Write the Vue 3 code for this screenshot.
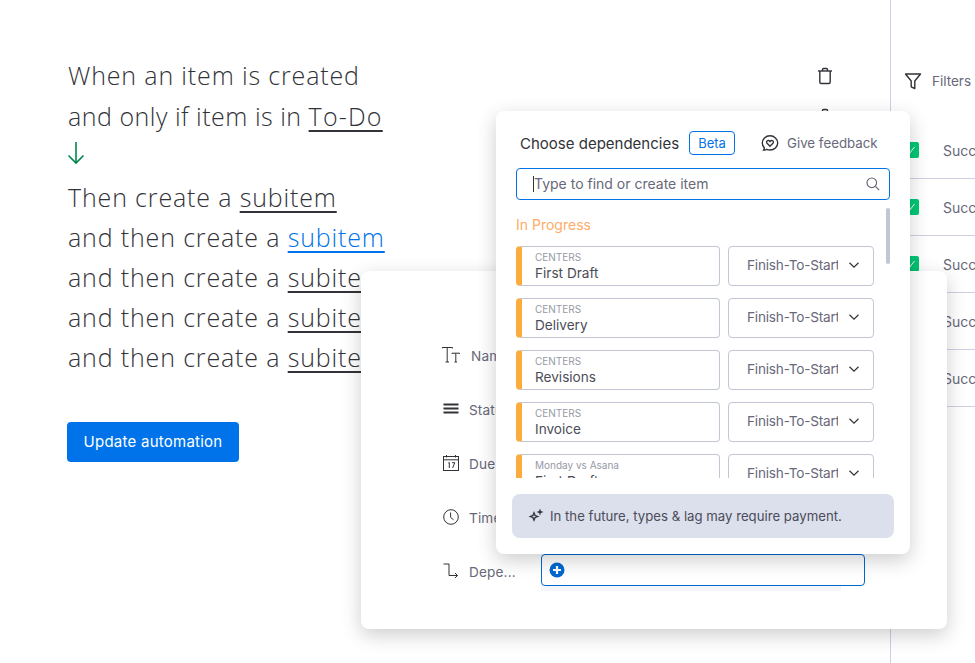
<template>
  <div class="page">
    <section class="editor">
      <div class="sentence">
        <div class="line">When an item is created</div>
        <div class="line condition">and only if item is in <span class="token">To-Do</span></div>
        <div class="arrow-row">
          <svg width="18" height="24" viewBox="0 0 18 24" fill="none" stroke="#00854d" stroke-width="1.6">
            <path d="M9 1V22" />
            <path d="M1.5 14.5L9 22L16.5 14.5" />
          </svg>
        </div>
        <div v-for="(line, i) in actions" :key="i" class="line">
          {{ line.text }} <span class="token" :class="{ active: line.active }">subitem</span>
        </div>
        <button class="update-btn">Update automation</button>
      </div>
      <div class="trash-col">
        <svg v-for="n in 2" :key="n" width="18" height="18" viewBox="0 0 18 18" fill="none" stroke="#323338" stroke-width="1.4">
          <path d="M2 4H16" />
          <path d="M6.5 4V2.6C6.5 1.9 7 1.5 7.6 1.5H10.4C11 1.5 11.5 1.9 11.5 2.6V4" />
          <path d="M3.8 4V15C3.8 15.9 4.4 16.5 5.2 16.5H12.8C13.6 16.5 14.2 15.9 14.2 15V4" />
        </svg>
      </div>
    </section>

    <aside class="log">
      <div class="filters">
        <svg width="18" height="18" viewBox="0 0 18 18" fill="none" stroke="#323338" stroke-width="1.4" stroke-linejoin="round">
          <path d="M1.5 2H16.5L10.8 9V16.5L7.2 14.8V9Z" />
        </svg>
        <span>Filters</span>
      </div>
      <div v-for="n in 5" :key="n" class="log-row">
        <span class="check">
          <svg width="10" height="10" viewBox="0 0 10 10" fill="none" stroke="#fff" stroke-width="1">
            <path d="M1.5 5.5L3.8 8L8.5 2" />
          </svg>
        </span>
        <span class="log-text">Success</span>
      </div>
    </aside>

    <div class="item-card">
      <div v-for="row in columns" :key="row.label" class="card-row">
        <span class="col-icon">
          <svg width="20" height="20" viewBox="1 0 20 20" fill="none" stroke="#323338" stroke-width="1">
            <template v-if="row.icon === 'text'">
              <path d="M1 3.5V2.5H11.5V3.5M6.2 2.5V17M4.5 17H8" />
              <path d="M11 9V8.2H18.5V9M14.8 8.2V17M13.5 17H16" />
            </template>
            <template v-else-if="row.icon === 'status'">
              <path stroke-width="1.8" d="M2.5 5.5H17.5M2.5 9.5H17.5M2.5 13.5H17.5" />
            </template>
            <template v-else-if="row.icon === 'date'">
              <rect x="2.5" y="3.5" width="15" height="14" />
              <path d="M2.5 6.8H17.5M5.5 2V4.5M14.5 2V4.5" />
              <path d="M7.3 10L8.3 9.5V15M11 9.7H13.8L11.6 15" />
            </template>
            <template v-else-if="row.icon === 'time'">
              <circle cx="10" cy="10" r="7.3" />
              <path d="M9.6 5.5V10.4L12.6 12.8" />
            </template>
            <template v-else>
              <path d="M2.5 3H8V14.5H16.5" />
              <path d="M14 12L16.5 14.5L14 17" />
            </template>
          </svg>
        </span>
        <span class="col-label" :class="{ first: row.icon === 'text' }">{{ row.label }}</span>
        <div v-if="row.icon === 'dep'" class="dep-wrap">
          <div class="dep-field">
            <svg width="16" height="16" viewBox="0 0 16 16">
              <circle cx="8" cy="8" r="7.5" fill="#0069d0" />
              <path d="M8 4V12M4 8H12" stroke="#fff" stroke-width="2.2" />
            </svg>
          </div>
        </div>
      </div>
    </div>

    <div class="dep-popover">
      <header class="pop-head">
        <span class="pop-title">Choose dependencies</span>
        <span class="beta">Beta</span>
        <span class="feedback">
          <svg width="18" height="18" viewBox="0 0 18 18" fill="none" stroke="#323338" stroke-width="1.4">
            <path d="M2.6 16C3.2 15.2 3.4 14.6 3.3 13.8C2 12.5 1.3 10.9 1.3 9C1.3 5.1 4.6 1.8 9 1.8C13.3 1.8 16.7 5.1 16.7 9C16.7 13 13.3 16 9 16C7.8 16 6.8 15.8 5.8 15.4C4.8 16 3.8 16.2 2.6 16Z" />
            <path d="M9 12.2L6.1 9.2C5.4 8.4 5.5 7.3 6.2 6.8C7 6.2 8.2 6.4 9 7.5C9.8 6.4 11 6.2 11.8 6.8C12.5 7.3 12.6 8.4 11.9 9.2Z" />
          </svg>
          Give feedback
        </span>
      </header>

      <div class="search-box">
        <span class="caret"></span>
        <span class="placeholder">Type to find or create item</span>
        <svg width="14" height="14" viewBox="0 0 14 14" fill="none" stroke="#676879" stroke-width="1.2">
          <circle cx="5.8" cy="5.8" r="4.8" />
          <path d="M9.4 9.4L13.2 13.2" />
        </svg>
      </div>

      <div class="dep-list">
        <div class="group-title">In Progress</div>
        <div v-for="(item, i) in items" :key="i" class="dep-row">
          <div class="dep-item">
            <small>{{ item.board }}</small>
            <span>{{ item.name }}</span>
          </div>
          <div class="dep-type">
            <span class="type-text">Finish-To-Start</span>
            <svg width="12" height="12" viewBox="0 0 12 12" fill="none" stroke="#323338" stroke-width="1.2">
              <path d="M1.5 3.8L6 8.2L10.5 3.8" />
            </svg>
          </div>
        </div>
      </div>
      <span class="scroll-thumb"></span>

      <div class="notice">
        <svg width="16" height="16" viewBox="0 0 16 16" fill="#323338">
          <path d="M6 3L7.6 6.9L11.5 8.5L7.6 10.1L6 14L4.4 10.1L0.5 8.5L4.4 6.9ZM6 6L5.6 8.1L3.5 8.5L5.6 8.9L6 11L6.4 8.9L8.5 8.5L6.4 8.1Z" fill-rule="evenodd" />
          <path d="M12 0.5L12.9 3.1L15.5 4L12.9 4.9L12 7.5L11.1 4.9L8.5 4L11.1 3.1Z" />
        </svg>
        <span>In the future, types &amp; lag may require payment.</span>
      </div>
    </div>
  </div>
</template>

<script setup>
const actions = [
  { text: 'Then create a', active: false },
  { text: 'and then create a', active: true },
  { text: 'and then create a', active: false },
  { text: 'and then create a', active: false },
  { text: 'and then create a', active: false },
]

const columns = [
  { label: 'Name', icon: 'text' },
  { label: 'Status', icon: 'status' },
  { label: 'Due date', icon: 'date' },
  { label: 'Timeline', icon: 'time' },
  { label: 'Depe...', icon: 'dep' },
]

const items = [
  { board: 'CENTERS', name: 'First Draft' },
  { board: 'CENTERS', name: 'Delivery' },
  { board: 'CENTERS', name: 'Revisions' },
  { board: 'CENTERS', name: 'Invoice' },
  { board: 'Monday vs Asana', name: 'First Draft' },
]
</script>

<style>
html, body {
  margin: 0;
  background: #fff;
  overflow: hidden;
}
</style>

<style scoped>
.page {
  position: relative;
  width: 975px;
  height: 663px;
  overflow: hidden;
  display: flex;
  background: #fff;
  color: #323338;
  font-family: Inter, "Liberation Sans", sans-serif;
}

.editor {
  width: 891px;
  flex: none;
  box-sizing: border-box;
  padding: 55px 56px 0 68px;
  border-right: 1px solid #cfd0e4;
  display: flex;
  justify-content: space-between;
}

.sentence {
  font-family: "Open Sans", sans-serif;
  font-weight: 300;
  font-size: 25px;
  letter-spacing: 0.85px;
}

.line {
  height: 40px;
  line-height: 40px;
  white-space: nowrap;
}

.line + .line {
  margin-top: 1px;
}

.arrow-row + .line ~ .line {
  margin-top: 0;
}

.line.condition {
  letter-spacing: 0.5px;
}

.arrow-row {
  height: 41px;
  display: flex;
  align-items: center;
  margin-left: -1px;
  padding-bottom: 8px;
  box-sizing: border-box;
}

.token {
  text-decoration: underline;
  text-decoration-thickness: 2px;
  text-underline-offset: 4px;
  text-decoration-color: #323338;
}

.condition .token {
  letter-spacing: 1.2px;
}

.token.active {
  color: #0073ea;
  text-decoration-color: #0073ea;
}

.update-btn {
  display: block;
  margin-top: 45px;
  margin-left: -1px;
  width: 172px;
  height: 40px;
  padding: 0 0 2px;
  border: none;
  border-radius: 4px;
  background: #0073ea;
  color: #fff;
  font-family: Inter, sans-serif;
  font-size: 15px;
  letter-spacing: 0.25px;
}

.trash-col {
  display: flex;
  flex-direction: column;
  gap: 23px;
  padding-top: 12px;
}

.log {
  flex: 1;
  min-width: 0;
}

.filters {
  display: flex;
  align-items: center;
  gap: 10px;
  height: 122px;
  padding: 40px 0 0 13px;
  font-size: 13.5px;
  color: #676879;
  box-sizing: border-box;
}

.log-row {
  height: 57px;
  box-sizing: border-box;
  border-bottom: 1px solid #cfd0e4;
  padding-left: 12px;
  display: flex;
  align-items: center;
  gap: 24px;
  white-space: nowrap;
  font-size: 14px;
  color: #676879;
}

.check {
  width: 16px;
  height: 16px;
  flex: none;
  border-radius: 2px;
  background: #00c875;
  display: flex;
  align-items: center;
  justify-content: center;
}

.item-card {
  position: absolute;
  left: 361px;
  top: 271px;
  width: 586px;
  height: 358px;
  box-sizing: border-box;
  padding: 57px 0 0 81px;
  background: #fff;
  border-radius: 8px;
  box-shadow: 0 6px 20px rgba(0, 0, 0, 0.2);
}

.card-row {
  height: 54px;
  display: flex;
  align-items: center;
  position: relative;
}

.col-icon {
  width: 27px;
  height: 20px;
  flex: none;
}

.col-label {
  width: 72px;
  flex: none;
  font-size: 13.6px;
  letter-spacing: 0.15px;
  color: #676879;
  padding-top: 2px;
  white-space: nowrap;
}

.col-label.first {
  padding-left: 2px;
  width: 70px;
}

.dep-wrap {
  width: 324px;
  padding: 2px 0 5px;
  background: linear-gradient(#f5f6f8, #f5f6f8) no-repeat left bottom / 300px 8px;
}

.dep-field {
  height: 32px;
  box-sizing: border-box;
  border: 1px solid #0069d0;
  border-radius: 4px;
  background: #fff;
  display: flex;
  align-items: center;
  padding-left: 7px;
}

.dep-popover {
  position: absolute;
  left: 496px;
  top: 111px;
  width: 414px;
  height: 443px;
  background: #fff;
  border-radius: 8px;
  box-shadow: 0 6px 20px rgba(0, 0, 0, 0.2);
}

.pop-head {
  display: flex;
  align-items: center;
  height: 24px;
  padding: 20px 0 1px 24px;
}

.pop-title {
  font-size: 15px;
  width: 169px;
  white-space: nowrap;
}

.beta {
  box-sizing: border-box;
  width: 46px;
  height: 24px;
  line-height: 22px;
  text-align: center;
  border: 1px solid #0073ea;
  border-radius: 4px;
  color: #0073ea;
  font-size: 13px;
}

.feedback {
  display: flex;
  align-items: center;
  gap: 8px;
  margin-left: 26px;
  font-size: 13.3px;
  color: #676879;
  white-space: nowrap;
}

.search-box {
  position: relative;
  display: flex;
  align-items: center;
  justify-content: space-between;
  box-sizing: border-box;
  width: 374px;
  height: 32px;
  margin: 12px 0 0 20px;
  padding: 0 9px 1px 17px;
  border: 1px solid #0073ea;
  border-radius: 4px;
  font-size: 14px;
  color: #676879;
}

.caret {
  position: absolute;
  left: 16px;
  top: 7px;
  width: 1px;
  height: 16px;
  background: #323338;
}

.dep-list {
  height: 270px;
  margin: 8px 0 0 20px;
  overflow: hidden;
}

.group-title {
  height: 38px;
  line-height: 34px;
  font-size: 14px;
  color: #ffab67;
}

.dep-row {
  display: flex;
  gap: 8px;
  width: 358px;
  height: 40px;
  margin-bottom: 12px;
}

.dep-item {
  box-sizing: border-box;
  width: 204px;
  border: 1px solid #c3c6d4;
  border-left: 6px solid #fdab3d;
  border-radius: 4px;
  padding: 4px 0 0 13px;
  display: flex;
  flex-direction: column;
  font-size: 13.6px;
  line-height: 18px;
  color: #4b4c58;
}

.dep-item small {
  font-size: 10px;
  line-height: 13px;
  color: #9699a6;
}

.dep-type {
  box-sizing: border-box;
  width: 146px;
  border: 1px solid #c3c6d4;
  border-radius: 4px;
  padding: 0 0 2px 18px;
  display: flex;
  align-items: center;
  gap: 10px;
  font-size: 13.6px;
  letter-spacing: -0.2px;
  color: #676879;
}

.type-text {
  width: 91px;
  overflow: hidden;
  white-space: nowrap;
}

.scroll-thumb {
  position: absolute;
  left: 390px;
  top: 97px;
  width: 4px;
  height: 56px;
  border-radius: 2px;
  background: #c3c6d4;
}

.notice {
  display: flex;
  align-items: center;
  gap: 6px;
  box-sizing: border-box;
  width: 382px;
  height: 44px;
  margin: 16px 0 0 16px;
  padding-left: 16px;
  border-radius: 8px;
  background: #dcdfec;
  font-size: 13.2px;
  color: #4b4c58;
}
</style>
